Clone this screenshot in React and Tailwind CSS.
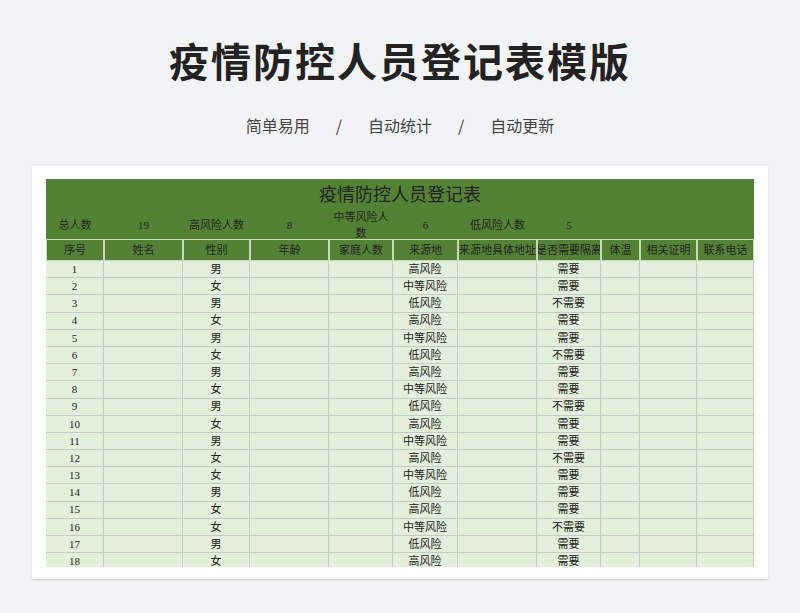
const cols = [58, 79, 67, 79, 64, 65, 79, 64, 39, 57, 57]
const heads = ['序号', '姓名', '性别', '年龄', '家庭人数', '来源地', '来源地具体地址', '是否需要隔离', '体温', '相关证明', '联系电话']
const sex = '男女男女男女男女男女男女女男女女男女'
const risk = ['高', '中等', '低', '高', '中等', '低', '高', '中等', '低', '高', '中等', '高', '中等', '低', '高', '中等', '低', '高']
const need = [1, 1, 0, 1, 1, 0, 1, 1, 0, 1, 1, 0, 1, 1, 1, 0, 1, 1]

export default function App() {
  const rows = risk.map((r, i) => [String(i + 1), '', sex[i], '', '', r + '风险', '', need[i] ? '需要' : '不需要', '', '', ''])
  return (
    <div className="h-[613px] w-[800px] bg-[#f2f3f5] pt-[34px]" style={{ fontFamily: '"Noto Sans CJK SC", sans-serif' }}>
      <h1 className="text-center text-[40px] font-bold leading-[52px] tracking-[2px] text-[#222]">疫情防控人员登记表模版</h1>
      <div className="mt-[27px] flex justify-center gap-[26px] text-[16px] text-[#444]">
        <span>简单易用</span><span>/</span><span>自动统计</span><span>/</span><span>自动更新</span>
      </div>
      <div className="mx-[32px] mt-[29px] bg-white px-[14px] pb-[12px] pt-[13px] shadow-sm">
        <div className="h-[388px] overflow-hidden text-[11px] text-[#222]" style={{ fontFamily: '"Liberation Serif", "Noto Sans CJK SC", serif' }}>
          <div className="bg-[#548235]">
            <div className="pt-[4px] text-center text-[18px] leading-[24px]">疫情防控人员登记表</div>
            <div className="flex h-[32px] items-center pt-[4px]">
              {[['总人数', 58], ['19', 79], ['高风险人数', 67], ['8', 79], ['中等风险人数', 64], ['6', 65], ['低风险人数', 79], ['5', 64]].map(([t, w], i) => (
                <div key={i} className="text-center" style={{ width: w }}>{t}</div>
              ))}
            </div>
          </div>
          <div className="flex bg-[#548235]">
            {heads.map((h, i) => (
              <div key={i} className="flex h-[22px] items-center justify-center overflow-hidden whitespace-nowrap border border-[#c9d7bd]" style={{ width: cols[i] }}>{h}</div>
            ))}
          </div>
          {rows.map((r, ri) => (
            <div key={ri} className="flex bg-[#e2efda]">
              {r.map((c, i) => (
                <div key={i} className="flex h-[17.2px] items-center justify-center border-b border-r border-[#c8c8c8]" style={{ width: cols[i] }}>{c}</div>
              ))}
            </div>
          ))}
        </div>
      </div>
    </div>
  )
}
